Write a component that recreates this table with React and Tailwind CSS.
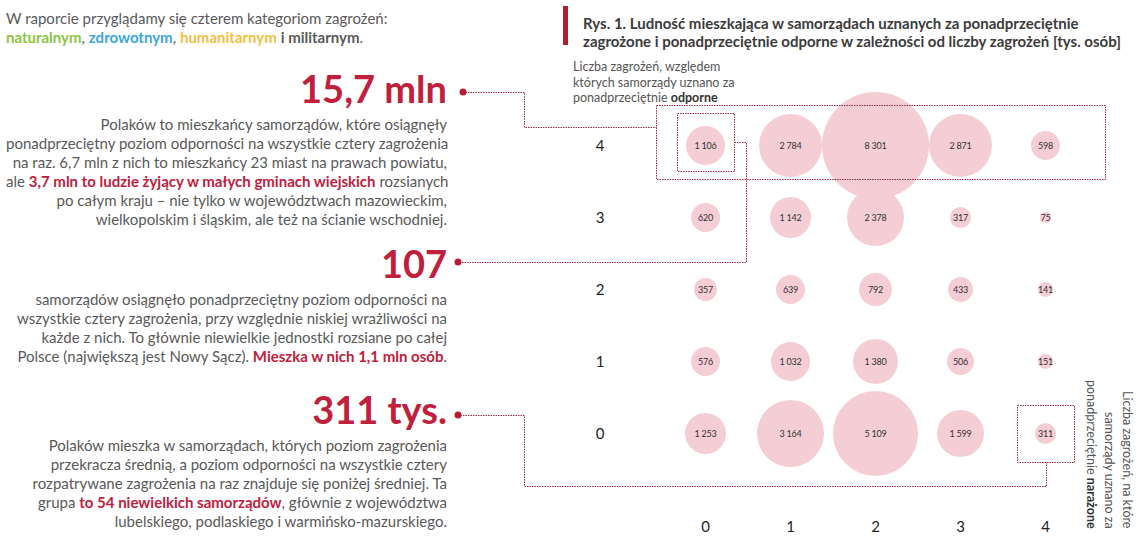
import React from 'react'

const RED = 'text-[#c0203c]'

const rows = [
  { label: '4', values: [1106, 2784, 8301, 2871, 598] },
  { label: '3', values: [620, 1142, 2378, 317, 75] },
  { label: '2', values: [357, 639, 792, 433, 141] },
  { label: '1', values: [576, 1032, 1380, 506, 151] },
  { label: '0', values: [1253, 3164, 5109, 1599, 311] },
]

const fmt = (v) => String(v).replace(/\B(?=(\d{3})+(?!\d))/g, '\u00a0')

function Bubble({ value }) {
  // area proportional to value
  const d = 1.185 * Math.sqrt(value)
  return (
    <div className="relative flex h-[72px] items-center justify-center">
      <div
        className="absolute rounded-full bg-[#f5cdd5]"
        style={{ width: d, height: d }}
      />
      <span className="relative whitespace-nowrap text-[9px] leading-none tracking-[-0.2px] text-[#333]">{fmt(value)}</span>
    </div>
  )
}

function Connectors() {
  const line = { stroke: '#9e2a3f', strokeWidth: 1, strokeDasharray: '1.5 1', fill: 'none' }
  return (
    <svg className="pointer-events-none absolute left-0 top-0" width="1146" height="543">
      <rect x="656.5" y="105.5" width="449" height="74" {...line} />
      <rect x="677.5" y="113.5" width="57" height="58" {...line} />
      <rect x="1017.5" y="405.5" width="57" height="57" {...line} />
      <polyline points="463,92.5 524.5,92.5 524.5,127.5 656.5,127.5" {...line} />
      <polyline points="734.5,142.5 746.5,142.5 746.5,262.5 458,262.5" {...line} />
      <polyline points="458,415.5 524.5,415.5 524.5,486.5 1046.5,486.5 1046.5,462.5" {...line} />
      <circle cx="463" cy="92" r="3.5" fill="#b81c32" />
      <circle cx="458" cy="262" r="3.5" fill="#b81c32" />
      <circle cx="458" cy="415" r="3.5" fill="#b81c32" />
    </svg>
  )
}

export default function App() {
  return (
    <div className="relative flex h-[543px] w-[1146px] overflow-hidden bg-white font-['Lato','Noto_Sans',sans-serif] text-[#595959]">
      <div className="w-[447px] shrink-0 pl-[6px] text-[15px] leading-[19px]">
        <div className="pt-[9px] whitespace-nowrap">
          <p>W raporcie przyglądamy się czterem kategoriom zagrożeń:</p>
          <p>
            <b className="text-[#8cc63e]">naturalnym</b>, <b className="text-[#3aa7df]">zdrowotnym</b>,{' '}
            <b className="text-[#f3c03f]">humanitarnym</b> <b>i militarnym</b>.
          </p>
        </div>

        <div className="whitespace-nowrap text-right">
          <p className={`mt-[22px] text-[38px] font-bold leading-[38px] ${RED}`}>15,7 mln</p>
          <p className="mt-[8px]">
            Polaków to mieszkańcy samorządów, które osiągnęły
            <br />
            ponadprzeciętny poziom odporności na wszystkie cztery zagrożenia
            <br />
            na raz. 6,7 mln z nich to mieszkańcy 23 miast na prawach powiatu,
            <br />
            ale <b className={RED}>3,7 mln to ludzie żyjący w małych gminach wiejskich</b> rozsianych
            <br />
            po całym kraju – nie tylko w województwach mazowieckim,
            <br />
            wielkopolskim i śląskim, ale też na ścianie wschodniej.
          </p>

          <p className={`mt-[15px] text-[38px] font-bold leading-[38px] ${RED}`}>107</p>
          <p className="mt-[8px]">
            samorządów osiągnęło ponadprzeciętny poziom odporności na
            <br />
            wszystkie cztery zagrożenia, przy względnie niskiej wrażliwości na
            <br />
            każde z nich. To głównie niewielkie jednostki rozsiane po całej
            <br />
            Polsce (największą jest Nowy Sącz). <b className={RED}>Mieszka w nich 1,1 mln osób</b>.
          </p>

          <p className={`mt-[24px] text-[38px] font-bold leading-[38px] ${RED}`}>311 tys.</p>
          <p className="mt-[8px]">
            Polaków mieszka w samorządach, których poziom zagrożenia
            <br />
            przekracza średnią, a poziom odporności na wszystkie cztery
            <br />
            rozpatrywane zagrożenia na raz znajduje się poniżej średniej. Ta
            <br />
            grupa <b className={RED}>to 54 niewielkich samorządów</b>, głównie z województwa
            <br />
            lubelskiego, podlaskiego i warmińsko-mazurskiego.
          </p>
        </div>
      </div>

      <div className="ml-[90px] flex flex-col">
        <div className="ml-[26px] flex">
          <div className="mt-[6px] h-[39px] w-[5px] shrink-0 bg-[#b71c2c]" />
          <h2 className="ml-[15px] mt-[14px] whitespace-nowrap text-[15px] font-bold leading-[18px] text-[#3b3b3b]">
            Rys. 1. Ludność mieszkająca w samorządach uznanych za ponadprzeciętnie
            <br />
            zagrożone i ponadprzeciętnie odporne w zależności od liczby zagrożeń [tys. osób]
          </h2>
        </div>

        <p className="ml-[36px] mt-[9px] text-[12.5px] leading-[15.5px] text-[#555]">
          Liczba zagrożeń, względem
          <br />
          których samorządy uznano za
          <br />
          ponadprzeciętnie <b className="text-[#333]">odporne</b>
        </p>

        <div className="flex items-end">
          <div className="mt-[4px] shrink-0">
            {rows.map((row) => (
              <div key={row.label} className="grid grid-cols-[126px_repeat(5,85px)]">
                <div className="flex h-[72px] items-center justify-center text-[15px] text-[#222]">{row.label}</div>
                {row.values.map((v, i) => (
                  <Bubble key={i} value={v} />
                ))}
              </div>
            ))}
            <div className="mt-[46px] grid grid-cols-[126px_repeat(5,85px)] text-[15px] leading-[20px] text-[#222]">
              <div />
              {[0, 1, 2, 3, 4].map((n) => (
                <div key={n} className="text-center">{n}</div>
              ))}
            </div>
          </div>

          <p className="-ml-[6px] mb-[7px] text-right text-[12.5px] leading-[18px] text-[#555] [writing-mode:vertical-rl]">
            Liczba zagrożeń, na które
            <br />
            samorządy uznano za
            <br />
            ponadprzeciętnie <b className="text-[#333]">narażone</b>
          </p>
        </div>
      </div>

      <Connectors />
    </div>
  )
}
